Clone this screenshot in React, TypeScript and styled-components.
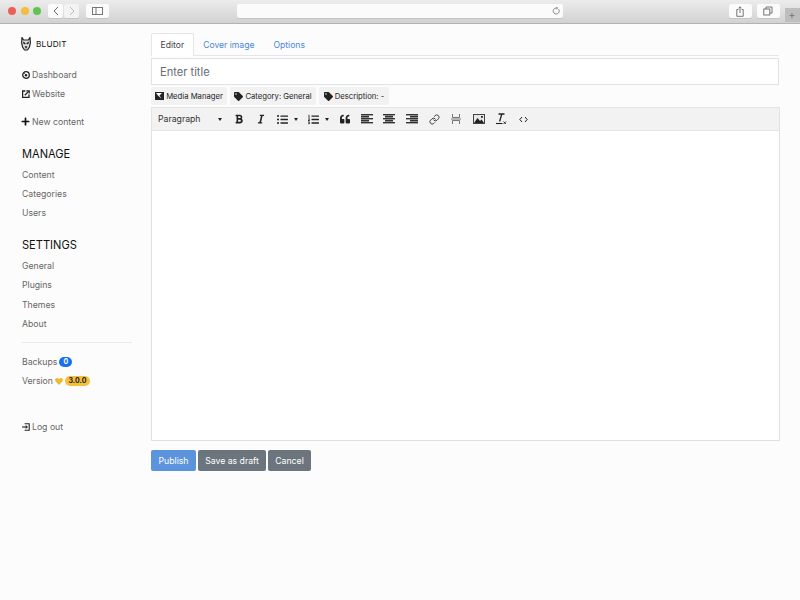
import React from "react";
import styled, { createGlobalStyle } from "styled-components";
import { Link as LinkIcon } from "lucide-react";
import {
	FaTag,
	FaPlus,
	FaBold,
	FaItalic,
	FaListUl,
	FaListOl,
	FaQuoteLeft,
} from "react-icons/fa";

const Global = createGlobalStyle`
	html, body {
		margin: 0;
		padding: 0;
		background: #fcfcfc;
		font-family: Inter, "Liberation Sans", sans-serif;
	}
	* { box-sizing: border-box; }
`;

const Page = styled.div`
	width: 800px;
	height: 600px;
	overflow: hidden;
	display: flex;
	flex-direction: column;
`;

/* browser chrome */
const Chrome = styled.div`
	height: 24px;
	flex: none;
	display: flex;
	align-items: center;
	padding: 0 0 1px 8px;
	background: linear-gradient(#ececec, #d2d2d2);
	border-bottom: 1px solid #b3b3b3;
`;

const Dot = styled.span<{ $c: string }>`
	width: 8px;
	height: 8px;
	border-radius: 50%;
	background: ${(p) => p.$c};
	margin-right: 4.5px;
`;

const ChromeBtn = styled.div<{ $w: number; $ml?: number; $faded?: boolean }>`
	width: ${(p) => p.$w}px;
	height: 14px;
	margin-left: ${(p) => p.$ml ?? 0}px;
	background: ${(p) => (p.$faded ? "#f3f3f3" : "#fbfbfb")};
	border-radius: 2px;
	box-shadow: 0 1px 0 #c4c4c4;
	display: flex;
	align-items: center;
	justify-content: center;
`;

const UrlBar = styled.div`
	width: 326px;
	height: 14px;
	margin-left: 128px;
	background: #fbfbfb;
	border-radius: 2px;
	box-shadow: 0 1px 0 #c4c4c4;
	display: flex;
	align-items: center;
	justify-content: flex-end;
	padding-right: 3px;
`;

const NewTab = styled.div`
	width: 15px;
	height: 14px;
	margin-left: 5px;
	align-self: flex-end;
	background: #bdbdbd;
	color: #777;
	font-size: 11px;
	line-height: 14px;
	text-align: center;
`;

const Body = styled.div`
	flex: 1;
	display: flex;
`;

/* sidebar */
const Side = styled.aside`
	width: 151px;
	flex: none;
	padding: 0 19px 0 22px;
	color: #666;
	font-size: 8.7px;
`;

const Brand = styled.div`
	display: flex;
	align-items: center;
	height: 16px;
	margin-top: 12px;
	margin-bottom: 13px;
	margin-left: -1px;
	color: #111;
	font-size: 8.2px;
	letter-spacing: 0.2px;
	gap: 5px;
`;

const NavLink = styled.div<{ $mt?: number }>`
	height: 19.2px;
	margin-top: ${(p) => p.$mt ?? 0}px;
	display: flex;
	align-items: center;
	gap: 2px;
	white-space: nowrap;
`;

const PlusIcon = styled(FaPlus)`
	width: 9px;
	height: 9px;
	margin-left: -1px;
	color: #111;
`;

const SideHeading = styled.div<{ $mt: number }>`
	height: 16px;
	line-height: 16px;
	margin-top: ${(p) => p.$mt}px;
	margin-bottom: 3.5px;
	color: #111;
	font-size: 11.1px;
`;

const Rule = styled.hr`
	border: 0;
	height: 1px;
	background: #e9e9e9;
	margin: 9px 0 9px;
`;

const Pill = styled.span<{ $bg: string; $fg: string; $w: number }>`
	width: ${(p) => p.$w}px;
	height: 10px;
	line-height: 10px;
	text-align: center;
	border-radius: 5px;
	background: ${(p) => p.$bg};
	color: ${(p) => p.$fg};
	font-size: 7px;
	font-weight: 700;
`;

/* main column */
const Main = styled.main`
	width: 629px;
	padding-top: 9px;
	display: flex;
	flex-direction: column;
`;

const Tabs = styled.div`
	height: 23px;
	margin-right: 1px;
	display: flex;
	border-bottom: 1px solid #e6e6e6;
	font-size: 8.6px;
`;

const Tab = styled.div<{ $active?: boolean }>`
	height: 23px;
	padding: 0 8.5px;
	line-height: 23px;
	color: ${(p) => (p.$active ? "#444" : "#4a86d8")};
	background: ${(p) => (p.$active ? "#fff" : "transparent")};
	border: 1px solid ${(p) => (p.$active ? "#e6e6e6" : "transparent")};
	border-bottom: 0;
	border-radius: 2px 2px 0 0;
`;

const TitleInput = styled.div`
	height: 27px;
	margin: 2px 1px 0 0;
	padding-left: 8px;
	line-height: 27px;
	background: #fff;
	border: 1px solid #dfe2e6;
	color: #666d74;
	font-size: 11.1px;
`;

const Chips = styled.div`
	height: 18px;
	margin-top: 2px;
	display: flex;
	gap: 3px;
`;

const Chip = styled.div<{ $w: number }>`
	width: ${(p) => p.$w}px;
	height: 18px;
	display: flex;
	align-items: center;
	justify-content: center;
	gap: 2px;
	background: #f2f2f2;
	border-radius: 2px;
	color: #222;
	font-size: 7.7px;
	white-space: nowrap;
`;

const Toolbar = styled.div`
	height: 23px;
	margin-top: 2px;
	display: flex;
	align-items: center;
	background: #f2f2f2;
	border: 1px solid #e4e4e4;
	border-bottom: 0;
	color: #222;
`;

const FormatSelect = styled.div`
	width: 76px;
	padding: 0 6px;
	display: flex;
	align-items: center;
	justify-content: space-between;
	font-size: 8.7px;
	color: #333;
`;

const ToolIcon = styled.div<{ $w?: number }>`
	width: ${(p) => p.$w ?? 22.3}px;
	height: 16px;
	display: flex;
	align-items: center;
	justify-content: center;
	flex: none;
`;

const ListGroup = styled.div<{ $w: number }>`
	width: ${(p) => p.$w}px;
	height: 16px;
	padding-left: 5px;
	display: flex;
	align-items: center;
	gap: 6px;
	flex: none;
`;

const Caret = styled.span`
	width: 0;
	height: 0;
	border-left: 2.5px solid transparent;
	border-right: 2.5px solid transparent;
	border-top: 3px solid #222;
`;

const EditArea = styled.div`
	height: 311px;
	background: #fff;
	border: 1px solid #e0e0e0;
	border-top: 1px solid #e4e4e4;
`;

const Actions = styled.div`
	margin-top: 9px;
	display: flex;
	gap: 2px;
`;

const Button = styled.div<{ $bg: string; $w: number }>`
	width: ${(p) => p.$w}px;
	height: 21px;
	line-height: 22px;
	text-align: center;
	border-radius: 2px;
	background: ${(p) => p.$bg};
	color: #fff;
	font-size: 8.7px;
`;

const AlignIcon = ({ kind }: { kind: "left" | "center" | "right" }) => {
	const rows = [12, 8, 12, 8, 12];
	const place = (w: number) =>
		kind === "left" ? 0 : kind === "right" ? 12 - w : (12 - w) / 2;
	return (
		<svg width="12" height="10" viewBox="0 0 12 10">
			{rows.map((w, i) => (
				<rect key={i} x={place(w)} y={i * 2} width={w} height="1.4" fill="#333" />
			))}
			{[0, 1, 2, 3].map((i) => (
				<rect key={i} x={place(8)} y={i * 2 + 1.4} width="8" height="0.6" fill="#777" />
			))}
		</svg>
	);
};

const MediaIcon = () => (
	<svg width="9" height="8" viewBox="0 0 9 8">
		<rect width="9" height="8" fill="#222" />
		<path d="M1 1 H7 L4.5 3.6 L6.6 6.8 L3 3.6 Z" fill="#fff" />
	</svg>
);

const ImageIcon = () => (
	<svg width="12" height="10" viewBox="0 0 12 10">
		<rect x="0.5" y="0.5" width="11" height="9" fill="#e8e8e8" stroke="#444" />
		<path d="M1 9 L4.5 4 L7 7 L8.5 5.5 L11 9 Z" fill="#222" />
		<rect x="8" y="2" width="1.8" height="1.8" fill="#222" />
	</svg>
);

const WolfLogo = () => (
	<svg width="10" height="14" viewBox="0 0 10 14">
		<path
			d="M1 0.5 L2.6 3 L7.4 3 L9 0.5 L9.4 6 L8.4 10 L6.5 13 L3.5 13 L1.6 10 L0.6 6 Z"
			fill="#ddd"
			stroke="#222"
			strokeWidth="1.2"
		/>
		<path d="M2 4.5 L4.6 6 L4.2 7.6 L2.4 6.8 Z M8 4.5 L5.4 6 L5.8 7.6 L7.6 6.8 Z M3.6 9.2 L6.4 9.2 L5 12 Z" fill="#222" />
	</svg>
);

const GaugeIcon = () => (
	<svg width="8" height="8" viewBox="0 0 8 8">
		<circle cx="4" cy="4" r="3.3" fill="none" stroke="#222" strokeWidth="1.3" />
		<circle cx="4" cy="4.3" r="1.2" fill="#222" />
		<path d="M4 4 L2.2 2.2" stroke="#222" strokeWidth="0.8" />
	</svg>
);

const ExternalIcon = () => (
	<svg width="8" height="8" viewBox="0 0 8 8" fill="none" stroke="#222" strokeWidth="1.3">
		<path d="M3.4 1 H0.6 V7.4 H7 V4.6" />
		<path d="M2.8 5.2 L6.6 1.4" />
		<path d="M4.4 0.8 H7.2 V3.6" />
	</svg>
);

const LogoutIcon = () => (
	<svg width="8" height="8" viewBox="0 0 8 8" fill="none" stroke="#222" strokeWidth="1.1">
		<path d="M2.6 0.7 H7.2 V7.3 H2.6" />
		<path d="M0 4 H5" />
		<path d="M3.6 2.6 L5.2 4 L3.6 5.4" />
	</svg>
);

const HeartIcon = () => (
	<svg width="8" height="7" viewBox="0 0 8 7" fill="#f3b82f">
		<path d="M4 7 L0.6 3.4 C-0.6 1.8 0.6 0 2 0 C3 0 3.6 0.6 4 1.2 C4.4 0.6 5 0 6 0 C7.4 0 8.6 1.8 7.4 3.4 Z" />
	</svg>
);

const App = () => {
	return (
		<Page>
			<Global />
			<Chrome>
				<Dot $c="#ed5f56" />
				<Dot $c="#f5bd3f" />
				<Dot $c="#5ec54f" />
				<ChromeBtn $w={15} $ml={2.5}>
					<svg width="6" height="10" viewBox="0 0 6 10" fill="none" stroke="#666" strokeWidth="1">
						<path d="M5 1 L1 5 L5 9" />
					</svg>
				</ChromeBtn>
				<ChromeBtn $w={15} $ml={1} $faded>
					<svg width="6" height="10" viewBox="0 0 6 10" fill="none" stroke="#bbb" strokeWidth="1">
						<path d="M1 1 L5 5 L1 9" />
					</svg>
				</ChromeBtn>
				<ChromeBtn $w={23} $ml={6.5}>
					<svg width="11" height="8" viewBox="0 0 11 8" fill="none" stroke="#777" strokeWidth="1">
						<rect x="0.5" y="0.5" width="10" height="7" />
						<path d="M4 0.5 V7.5" />
					</svg>
				</ChromeBtn>
				<UrlBar>
					<svg width="8" height="8" viewBox="0 0 8 8" fill="none" stroke="#777" strokeWidth="0.9">
						<path d="M6.6 2.2 A3 3 0 1 1 4 1 L5.4 1" />
						<path d="M4.4 0 L5.6 1 L4.4 2" />
					</svg>
				</UrlBar>
				<ChromeBtn $w={23} $ml={166}>
					<svg width="8" height="11" viewBox="0 0 8 11" fill="none" stroke="#666" strokeWidth="0.9">
						<path d="M2.4 3.5 H0.8 V10.3 H7.2 V3.5 H5.6" />
						<path d="M4 7 V0.8 M2.6 2.2 L4 0.8 L5.4 2.2" />
					</svg>
				</ChromeBtn>
				<ChromeBtn $w={23} $ml={5}>
					<svg width="10" height="10" viewBox="0 0 10 10" fill="none" stroke="#666" strokeWidth="0.9">
						<rect x="0.8" y="3" width="6" height="6" />
						<path d="M3 3 V1 H9 V7 H7" />
					</svg>
				</ChromeBtn>
				<NewTab>+</NewTab>
			</Chrome>
			<Body>
				<Side>
					<Brand>
						<WolfLogo />
						BLUDIT
					</Brand>
					<NavLink>
						<GaugeIcon />
						Dashboard
					</NavLink>
					<NavLink>
						<ExternalIcon />
						Website
					</NavLink>
					<NavLink $mt={9}>
						<PlusIcon />
						New content
					</NavLink>
					<SideHeading $mt={14}>MANAGE</SideHeading>
					<NavLink>Content</NavLink>
					<NavLink>Categories</NavLink>
					<NavLink>Users</NavLink>
					<SideHeading $mt={14.5}>SETTINGS</SideHeading>
					<NavLink>General</NavLink>
					<NavLink>Plugins</NavLink>
					<NavLink>Themes</NavLink>
					<NavLink>About</NavLink>
					<Rule />
					<NavLink>
						Backups
						<Pill $bg="#1a6ff0" $fg="#fff" $w={13}>0</Pill>
					</NavLink>
					<NavLink>
						Version
						<HeartIcon />
						<Pill $bg="#f6c03d" $fg="#222" $w={25}>3.0.0</Pill>
					</NavLink>
					<NavLink $mt={27}>
						<LogoutIcon />
						Log out
					</NavLink>
				</Side>
				<Main>
					<Tabs>
						<Tab $active>Editor</Tab>
						<Tab>Cover image</Tab>
						<Tab>Options</Tab>
					</Tabs>
					<TitleInput>Enter title</TitleInput>
					<Chips>
						<Chip $w={76}>
							<MediaIcon />
							Media Manager
						</Chip>
						<Chip $w={86}>
							<FaTag size={9} />
							Category: General
						</Chip>
						<Chip $w={70}>
							<FaTag size={9} />
							Description: -
						</Chip>
					</Chips>
					<Toolbar>
						<FormatSelect>
							Paragraph
							<Caret />
						</FormatSelect>
						<ToolIcon $w={22}>
							<FaBold size={10} />
						</ToolIcon>
						<ToolIcon $w={22}>
							<FaItalic size={10} />
						</ToolIcon>
						<ListGroup $w={31}>
							<FaListUl size={11} />
							<Caret />
						</ListGroup>
						<ListGroup $w={30}>
							<FaListOl size={11} />
							<Caret />
						</ListGroup>
						<ToolIcon $w={23}>
							<FaQuoteLeft size={10} />
						</ToolIcon>
						<ToolIcon>
							<AlignIcon kind="left" />
						</ToolIcon>
						<ToolIcon>
							<AlignIcon kind="center" />
						</ToolIcon>
						<ToolIcon>
							<AlignIcon kind="right" />
						</ToolIcon>
						<ToolIcon>
							<LinkIcon size={11} color="#333" strokeWidth={2} />
						</ToolIcon>
						<ToolIcon>
							<svg width="10" height="10" viewBox="0 0 10 10" fill="none" stroke="#777" strokeWidth="1">
								<path d="M1.5 0 V3.5 H8.5 V0 M0 5 H10 M1.5 10 V6.5 H8.5 V10" />
							</svg>
						</ToolIcon>
						<ToolIcon>
							<ImageIcon />
						</ToolIcon>
						<ToolIcon>
							<svg width="12" height="12" viewBox="0 0 12 12" fill="none" stroke="#222">
								<path d="M3.5 1 H9.5 M6.8 1 L4.6 8.5" strokeWidth="1.3" />
								<path d="M1 10.5 H7.5" strokeWidth="1.1" />
								<path d="M8.5 8.5 L11 11 M11 8.5 L8.5 11" strokeWidth="0.9" />
							</svg>
						</ToolIcon>
						<ToolIcon>
							<svg width="9" height="7" viewBox="0 0 9 7" fill="none" stroke="#222" strokeWidth="1">
								<path d="M3 1 L0.8 3.5 L3 6 M6 1 L8.2 3.5 L6 6" />
							</svg>
						</ToolIcon>
					</Toolbar>
					<EditArea />
					<Actions>
						<Button $bg="#5b94dd" $w={45}>Publish</Button>
						<Button $bg="#6c757d" $w={68}>Save as draft</Button>
						<Button $bg="#6c757d" $w={43}>Cancel</Button>
					</Actions>
				</Main>
			</Body>
		</Page>
	);
};

export default App;
